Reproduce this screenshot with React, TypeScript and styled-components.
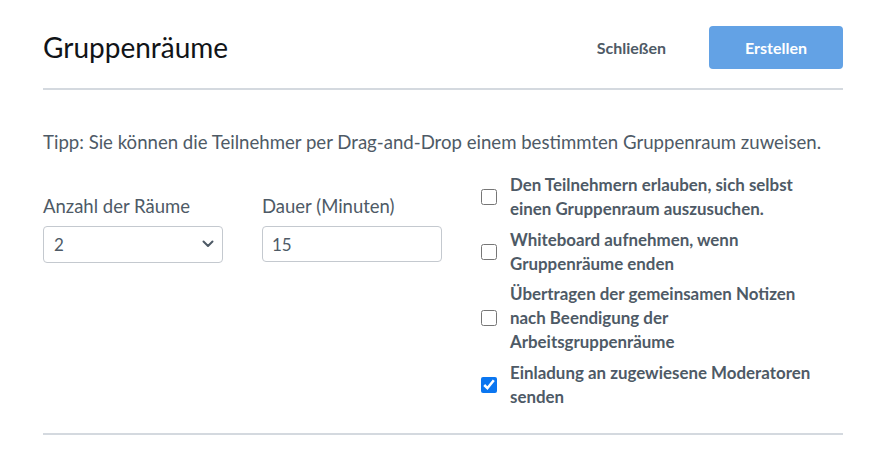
import React from 'react'
import styled, { createGlobalStyle } from 'styled-components'

const GlobalStyle = createGlobalStyle`
  html, body {
    margin: 0;
    padding: 0;
    background: #ffffff;
  }
  body {
    font-family: Lato, 'Liberation Sans', sans-serif;
    color: #4e5a66;
  }
`

const Modal = styled.div`
  width: 886px;
  box-sizing: border-box;
  padding: 26px 43px 0;
`

const Header = styled.div`
  display: flex;
  flex-flow: row nowrap;
  justify-content: space-between;
  align-items: center;
  padding-bottom: 19px;
  border-bottom: 2px solid #d4d9df;
`

const Title = styled.h1`
  margin: 0;
  font-size: 28px;
  font-weight: 400;
  color: #111418;
  line-height: 43px;
`

const Actions = styled.div`
  display: flex;
  align-items: center;
  gap: 43px;
`

const Button = styled.button<{ $primary?: boolean }>`
  font-family: inherit;
  font-size: 16px;
  font-weight: 700;
  height: 43px;
  border: none;
  border-radius: 4px;
  cursor: pointer;
  padding: ${({ $primary }) => ($primary ? '0 36px' : '0')};
  width: ${({ $primary }) => ($primary ? '134px' : 'auto')};
  background: ${({ $primary }) => ($primary ? '#63a2e5' : 'transparent')};
  color: ${({ $primary }) => ($primary ? '#ffffff' : '#4e5a66')};
`

const Body = styled.div`
  padding: 40px 0 24px;
  border-bottom: 2px solid #d4d9df;
`

const Tip = styled.p`
  margin: 0 0 19px;
  font-size: 18.6px;
  line-height: 24px;
`

const FormRow = styled.div`
  display: grid;
  grid-template-columns: 180px 180px 1fr;
  column-gap: 39px;
  align-items: start;
`

const Field = styled.label`
  display: flex;
  flex-flow: column nowrap;
  gap: 8px;
  margin-top: 21px;
`

const FieldLabel = styled.span`
  font-size: 18.5px;
  line-height: 24px;
`

const SelectWrap = styled.div`
  position: relative;
  height: 37px;
`

const Select = styled.select`
  appearance: none;
  width: 100%;
  height: 37px;
  box-sizing: border-box;
  border: 1px solid #c4c9cf;
  border-radius: 4px;
  padding: 0 10px;
  font-family: inherit;
  font-size: 17px;
  color: #4e5a66;
  background: #ffffff;
`

const Chevron = styled.svg`
  position: absolute;
  right: 9px;
  top: 14px;
  pointer-events: none;
`

const TextInput = styled.input`
  width: 100%;
  height: 36px;
  box-sizing: border-box;
  border: 1px solid #c4c9cf;
  border-radius: 4px;
  padding: 0 9px;
  font-family: inherit;
  font-size: 17px;
  color: #4e5a66;
`

const CheckList = styled.div`
  display: flex;
  flex-flow: column nowrap;
  gap: 6.5px;
`

const CheckItem = styled.label`
  display: flex;
  align-items: center;
  gap: 13px;
`

const Checkbox = styled.input`
  width: 16px;
  height: 16px;
  margin: 0;
  flex: none;
  accent-color: #0b76f0;
`

const CheckText = styled.span`
  font-size: 16.9px;
  font-weight: 700;
  line-height: 24px;
  max-width: 310px;
`

const options = [
  { text: 'Den Teilnehmern erlauben, sich selbst einen Gruppenraum auszusuchen.', checked: false },
  { text: 'Whiteboard aufnehmen, wenn Gruppenräume enden', checked: false },
  { text: 'Übertragen der gemeinsamen Notizen nach Beendigung der Arbeitsgruppenräume', checked: false },
  { text: 'Einladung an zugewiesene Moderatoren senden', checked: true },
]

const App = () => {
  return (
    <Modal>
      <GlobalStyle />
      <Header>
        <Title>Gruppenräume</Title>
        <Actions>
          <Button>Schließen</Button>
          <Button $primary>Erstellen</Button>
        </Actions>
      </Header>
      <Body>
        <Tip>Tipp: Sie können die Teilnehmer per Drag-and-Drop einem bestimmten Gruppenraum zuweisen.</Tip>
        <FormRow>
          <Field>
            <FieldLabel>Anzahl der Räume</FieldLabel>
            <SelectWrap>
              <Select defaultValue="2">
                {[2, 3, 4, 5, 6, 7, 8].map((n) => (
                  <option key={n} value={n}>
                    {n}
                  </option>
                ))}
              </Select>
              <Chevron width="12" height="8" viewBox="0 0 12 8">
                <path d="M1.5 1.5 L6 6 L10.5 1.5" fill="none" stroke="#4e5a66" strokeWidth="2" strokeLinecap="round" strokeLinejoin="round" />
              </Chevron>
            </SelectWrap>
          </Field>
          <Field>
            <FieldLabel>Dauer (Minuten)</FieldLabel>
            <TextInput type="number" defaultValue={15} />
          </Field>
          <CheckList>
            {options.map((opt, index) => (
              <CheckItem key={index}>
                <Checkbox type="checkbox" defaultChecked={opt.checked} />
                <CheckText>{opt.text}</CheckText>
              </CheckItem>
            ))}
          </CheckList>
        </FormRow>
      </Body>
    </Modal>
  )
}

export default App
